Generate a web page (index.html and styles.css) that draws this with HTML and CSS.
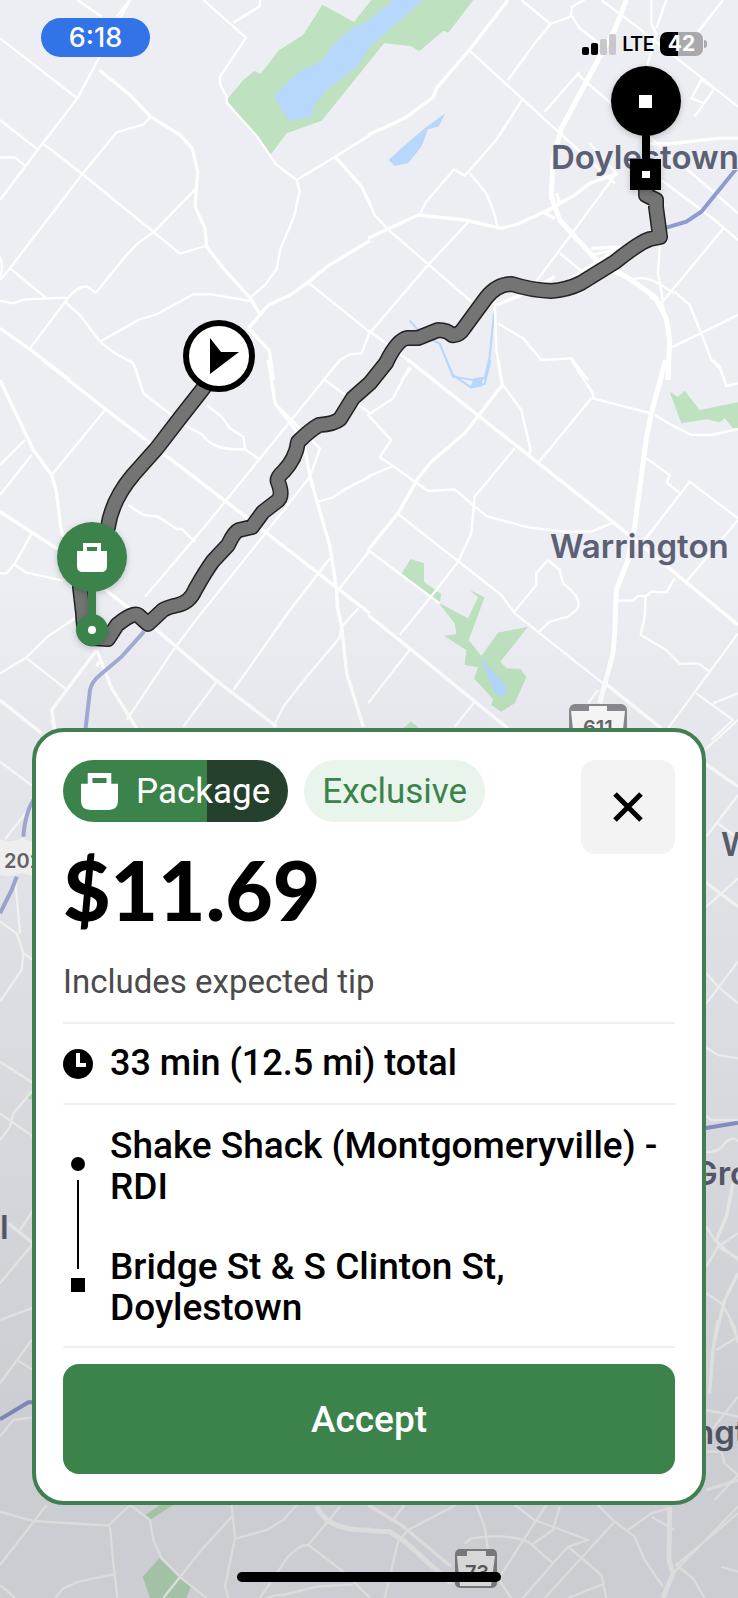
FILE: index.html
```html
<!DOCTYPE html>
<html lang="en">
<head>
  <meta charset="UTF-8">
  <meta name="viewport" content="width=device-width, initial-scale=1">
  <title>Delivery offer</title>
  <link rel="stylesheet" href="styles.css">
</head>
<body>
  <div class="screen">

    <!-- base map, drawn in tiles -->
    <svg class="map" viewBox="0 0 2214 4794" preserveAspectRatio="xMidYMid slice" aria-hidden="true">
      <g>
        <path class="park" d="M967 14L1062 66L1114 0H1420L1345 98L1330 92L1258 154L1232 138L1152 130L1104 190L965 362L860 400L813 463L680 300L730 240L763 213L782 222L835 152L910 104Z"/>
        <path class="water" d="M822 288L895 215L965 184L1008 125L1062 82L1104 64L1180 0H1270L1104 145L1075 198L985 265L942 315L935 350L865 362Z"/>
        <path class="road" d="M390 0L232 295L115 447L0 600M350 50L390 0M0 115L232 295M0 360L115 450M0 473H45L75 497M132 433L247 522L540 761L617 738M452 350L430 373L350 397L247 522L30 805L0 840M588 565L463 695L413 730L375 770L287 879L262 860Q235 855 205 893L90 1045M30 805L137 893M0 903L40 910L75 898L205 893M197 908L240 945L300 1025L340 1057L400 1090L417 1140M300 1025L415 960L470 943L580 883H635L750 903M750 893L795 855L830 807L840 750L882 650L899 573L890 540M0 770Q12 800 0 830M610 0L738 113L660 230V253L680 288V308L770 408L828 493L890 540L1005 470L1110 405M780 0V18L700 68M970 1140L1020 1080L1050 1063L1085 1060L1108 1000M925 848L1108 995M232 0L305 50"/>
        <path class="road wide" d="M298 210L390 285L452 350L540 405L577 445L593 515L585 620L615 685L620 740L670 805L750 893L778 940M745 985L805 915L870 885L920 850L985 797L1110 722M745 985L808 1052L820 1140M1005 470L1085 560L1110 612M0 985L90 1048L210 1140"/>
      </g>
      <g transform="translate(1104 0)">
        <path class="water" d="M232 340L212 380L180 388L160 440L120 490L80 498L62 480L100 445L170 385Z"/>
        <path class="stream" d="M125 962L150 990M378 940L365 1070L350 1135L315 1140L255 1130L215 1030L195 1022"/>
        <path class="road" d="M460 0L548 72L608 50L612 20L650 0M548 72L500 130L420 240M305 152L740 550M465 295L385 420L290 527L258 508L175 605L157 640M305 520L355 580L375 630L390 683M0 600L20 645L60 688L310 905M305 662L180 795L0 1005M610 45L635 85L700 135M700 0L800 75L1110 320M850 0V72L865 100L838 195M895 0L865 85M1065 0L990 95M635 215L530 335M625 220L1110 640M665 430L745 520L575 750L500 850M575 760L650 820M670 765L740 750L600 840M1070 680L880 910M1110 720L1040 660L880 540M390 970L465 1015L520 1080L610 1075L660 1140M380 900L385 1050L400 1140M920 875L965 915L1000 1000L1030 1080L1055 1105L1070 1140M1110 945L905 1045M875 740L870 820L885 905M790 840Q830 825 870 850L920 880M980 350L1040 265L1000 240L970 295L1010 310M0 990L200 1140M130 1105L100 1140"/>
        <path class="road wide" d="M0 405L110 355L195 292L205 265L300 155L420 0M0 715L150 645L290 660L400 685L450 672L540 630L620 585L665 550L750 520M385 915L460 885L560 830M840 430L900 432L1050 415H1110M775 740L670 745"/>
        <path class="road main" d="M775 0L740 90L690 180L650 255L580 385L555 475L550 590L575 660L680 775L790 840L860 890L895 955L905 1020L900 1140"/>
        <path class="road wide" d="M565 580L575 610L530 640L560 655M670 760L700 800L770 830M845 890L880 910L890 940"/>
        <path class="highway" d="M895 683L955 665L1000 635L1110 500"/>
      </g>
      <g transform="translate(0 1080)">
        <path class="road" d="M315 150L155 345M75 240L0 315M95 285L0 405M390 0L405 20L430 100L560 200L605 222Q640 275 735 267L780 300M620 135L665 170L690 205L730 230L735 265M1020 0L610 505L435 710M975 60L1110 160M825 130L960 265L930 350L800 515L580 790L520 870L380 1080M385 435L430 465L475 470L530 507H545L585 545M0 640H20L45 610L95 520M45 615L80 638L190 662M0 940L78 893L145 828L225 775M78 893L195 985M955 425L1000 412L1040 385L1110 350M990 595L870 750L700 990M650 965L550 1100M1075 745L1025 800L1018 835L920 950L850 1040L820 1100M1110 570L1015 690"/>
        <path class="road wide" d="M128 0L320 150L685 430L1110 760M0 60L100 270L155 345L170 400L182 500L188 530M0 455L170 565L330 700L470 810L640 955L830 1100M805 0L825 130L910 240L930 350L990 560L1010 690L1012 740L1025 800L1040 940L1090 1100M290 870L155 1050L165 1110M290 870L335 985L410 1105M290 920Q300 895 310 915M0 1020L125 1120"/>
        <path class="highway soft" d="M432 815L365 890L300 945Q275 965 270 990L255 1120"/>
      </g>
      <g transform="translate(1104 1080)">
        <path class="park" d="M905 95L930 110L950 92L995 150L1110 127V205H1095L1070 175L1055 187L1015 178L940 190ZM128 597L168 610V665L220 703L215 730L300 775L330 712L305 690L350 712L302 840L340 888L390 818L480 800L397 905L415 925L458 927L475 952L440 1030L400 1055L370 1035L375 1018L318 955L330 922L290 915L295 870L228 827L265 822L260 790L205 720L98 645ZM105 1105L128 1085L150 1100V1125H105Z"/>
        <path class="water" d="M335 890L420 985L405 1012L380 998Z"/>
        <path class="stream" d="M235 0L255 45L310 83L350 72L368 0"/>
        <path class="water" d="M318 55L345 50L340 80L305 85Z"/>
        <path class="road" d="M125 20L75 115L0 165L70 240L35 292L75 318L180 393L260 388L315 435L355 468L480 502L590 515H670L730 490M75 318L0 350M440 265L320 410L310 520L270 605L205 690L95 825M88 460L400 705L440 760L705 970M405 75L460 150L488 270L480 290M610 0L675 100V115L850 160M670 115L510 310M860 165L920 200L970 225H1030L1110 207M835 295L905 345L897 368L935 400M830 540L965 365L1110 475M1110 480L955 665M540 600L505 640V675L435 760M540 600L575 630L585 670Q650 720 625 750L600 770L545 785L510 818M750 722H795L810 708H835L850 695L895 697L920 655M833 710L830 770L818 825L895 870L935 912L990 910L1025 935M1110 820L900 1105M985 1000L1095 1080L1030 1140M1035 1030L1110 1000M125 870L0 1030M320 1025L260 1100M690 990L660 1030M1035 0L1055 20L1075 78L1110 70"/>
        <path class="road wide" d="M120 0L740 490L1110 795M390 0L403 75L290 220L190 305L150 355L90 460L0 570M0 765L125 865L420 1105M705 965L880 1105"/>
        <path class="road" d="M0 570L215 730"/>
        <path class="road main" d="M893 0L850 160L835 235L800 500L780 600L745 690L740 820L735 880L695 1030"/>
      </g>
      <g transform="translate(0 2160)">
        <path class="road" d="M0 125L100 200M100 250L15 358M0 605L50 640L70 700L65 750L0 845M70 700L100 720M45 470L60 640M155 0L165 35"/>
        <path class="highway soft" d="M100 240Q75 280 70 350M50 470L35 510L0 580"/>
      </g>
      <g transform="translate(1104 2160)">
        <path class="road" d="M1110 0L1010 90M1110 225L1015 350M1050 310L1110 355M1110 475L1015 560M1015 760L1050 800L1110 850M1110 725L1015 850"/>
        <path class="road wide" d="M1010 130L1110 200M1010 485L1110 560"/>
      </g>
      <g transform="translate(0 3030)">
        <path class="park" d="M80 265L100 245V270Z"/>
        <path class="road" d="M0 155L100 220M100 240L40 310L30 350L0 390M0 310L35 335L100 380M100 600L60 660M100 700L0 820M0 930L100 893"/>
        <path class="road wide" d="M25 640L100 700"/>
      </g>
      <g transform="translate(1104 3030)">
        <path class="road" d="M1010 110L1050 135L1110 145M1010 315L1030 330H1110M1015 425Q1050 430 1070 400Q1095 375 1110 395M1015 650L1040 690L1110 750M1015 770L1050 710L1110 670M1015 850L1060 880L1100 950L1110 1000"/>
        <path class="road wide" d="M1110 500L1095 520L1075 620L1045 690L1060 715L1110 745M1110 790L1070 870L1040 990"/>
        <path class="highway" d="M1010 355L1110 338"/>
      </g>
      <g transform="translate(0 3960)">
        <path class="park" d="M433 587L480 555H520L450 600ZM478 715L572 800L560 834H450L428 770Z"/>
        <path class="road" d="M95 60L0 190M50 120L100 150M0 350L40 300L95 293M0 575L100 603L325 617L390 555M140 555L0 735M330 620L340 730L352 834M340 763L235 785L190 805L165 834M0 795L45 834M390 555L450 600L460 660L485 715L545 775L620 834M695 590L600 695L490 834M695 555L705 655L675 800L685 834M710 655L800 630L850 600L890 555M1020 560L925 675L1030 755L1110 834M925 675Q895 675 860 715L820 775L780 834M800 834L830 825H850L950 800L1060 793"/>
        <path class="road main" d="M950 560Q985 635 1110 630"/>
        <path class="highway" d="M0 298L85 247H100"/>
      </g>
      <g transform="translate(1104 3960)">
        <path class="road" d="M110 555L75 600M265 555L120 630L90 665L50 834M325 555L350 620L360 690L385 770L430 834M440 555L500 600L660 660L600 680M535 555L450 685L390 780M290 670L310 655Q420 640 480 665L555 730L465 834M575 560L555 630L490 675M600 680L555 730M600 680L700 765L715 834M850 590L920 630M900 565L850 580L780 630M710 790L600 834M690 555L740 605L800 650L830 720L885 800M740 605L530 834M1110 560L915 760M1110 580L925 735L975 775L1010 834M1060 740L1110 755M1110 230L1015 350M1015 270L1110 290M1015 395H1060L1070 430L1110 465L1040 540M1110 50L1045 90M1085 0L1110 60"/>
        <path class="road wide" d="M0 555L100 615L250 740M1015 510L1110 480M1050 0L1035 90L1025 220"/>
        <path class="road main" d="M0 632L65 635L110 665L250 790M905 560L903 720L915 760L885 834"/>
      </g>
    </svg>

    <!-- place names, road shields, route and pins -->
    <svg class="map" viewBox="0 0 738 1598" preserveAspectRatio="xMidYMid slice" role="img" aria-label="Route map">
      <defs>
        <linearGradient id="shade" x1="0" y1="0" x2="0" y2="1">
          <stop offset="0.36" stop-color="#000" stop-opacity="0"/>
          <stop offset="0.46" stop-color="#000" stop-opacity="0.03"/>
          <stop offset="0.9" stop-color="#000" stop-opacity="0.14"/>
          <stop offset="1" stop-color="#000" stop-opacity="0.14"/>
        </linearGradient>
      </defs>

      <text class="place" x="551" y="169">Doylestown</text>
      <text class="place" x="550" y="558">Warrington</text>
      <text class="place" x="721" y="856">W</text>
      <text class="place" x="693" y="1185">Gro</text>
      <text class="place" x="0" y="1239">l</text>
      <text class="place" x="694" y="1444">ngt</text>

      <g class="shield">
        <path d="M-20 841L0 839Q12 844 22 838Q34 844 46 840V872Q34 879 22 873Q10 878 0 875L-20 874Z" class="shield-face"/>
        <text x="4" y="868">202</text>
      </g>
      <g class="shield">
        <rect x="569" y="704" width="58" height="54" rx="6" class="shield-edge"/>
        <path class="shield-face" d="M571 711H589V706H607V711H625L620 756H576Z"/>
        <text x="583" y="735">611</text>
      </g>
      <g class="shield">
        <rect x="455" y="1549" width="42" height="39" rx="5" class="shield-edge"/>
        <path class="shield-face" d="M457 1556H467V1551H486V1556H495L491 1586H460Z"/>
        <text x="465" y="1580">73</text>
      </g>

      <rect width="738" height="1598" fill="url(#shade)"/>

      <path class="route-edge" d="M218 368L202 390L180 418L157 448L133 475Q112 500 108 527L80 587L83 613Q84 640 92 638L108 639L117 625Q133 612 138 615L148 624L163 610Q168 607 178 605Q190 602 195 590Q205 572 213 561L228 545Q234 532 239 530L252 527L263 512L276 502Q284 497 278 482Q276 478 284 471Q296 458 298 442Q310 430 319 425Q334 424 340 419L353 398L370 383L386 363Q397 340 407 338H418L438 330Q447 330 452 335Q459 336 464 328L486 298Q497 284 512 284Q530 290 551 291Q567 290 581 283L615 262Q640 242 650 239L660 237L656 207V200L646 195V185"/>
      <path class="route-fill" d="M218 368L202 390L180 418L157 448L133 475Q112 500 108 527L80 587L83 613Q84 640 92 638L108 639L117 625Q133 612 138 615L148 624L163 610Q168 607 178 605Q190 602 195 590Q205 572 213 561L228 545Q234 532 239 530L252 527L263 512L276 502Q284 497 278 482Q276 478 284 471Q296 458 298 442Q310 430 319 425Q334 424 340 419L353 398L370 383L386 363Q397 340 407 338H418L438 330Q447 330 452 335Q459 336 464 328L486 298Q497 284 512 284Q530 290 551 291Q567 290 581 283L615 262Q640 242 650 239L660 237L656 207V200L646 195V185"/>

      <!-- driver -->
      <circle cx="219" cy="356" r="33" fill="#fff" stroke="#000" stroke-width="6"/>
      <path d="M210 338L221 352H239L210 374Z"/>

      <!-- pickup -->
      <g class="pin pickup">
        <circle cx="92" cy="557" r="35"/>
        <path d="M88 590H96V618H88Z"/>
        <circle cx="92" cy="630" r="16"/>
        <circle cx="92" cy="630" r="4" fill="#fff"/>
        <path fill="#fff" fill-rule="evenodd" d="M83 543H101V551H107V566Q107 572 101 572H83Q77 572 77 566V551H83ZM87 547V551H97V547Z"/>
      </g>

      <!-- dropoff -->
      <g class="pin">
        <circle cx="646" cy="101" r="35"/>
        <path d="M642 130H650V162H642ZM630 159H661V190H630Z"/>
        <path fill="#fff" d="M639 95H652V108H639ZM642 171H650V178H642Z"/>
      </g>
    </svg>

    <header class="status">
      <span class="clock">6:18</span>
      <div class="signals">
        <svg width="34" height="21" viewBox="0 0 34 21" aria-hidden="true">
          <rect x="0" y="13" width="7" height="8" rx="2"/>
          <rect x="9" y="9" width="7" height="12" rx="2"/>
          <rect x="18" y="5" width="7" height="16" rx="2" fill="#c8c8cc"/>
          <rect x="27" y="0" width="7" height="21" rx="2" fill="#c8c8cc"/>
        </svg>
        <span class="network">LTE</span>
        <span class="battery">42</span>
      </div>
    </header>

    <main class="offer">
      <div class="offer-top">
        <div class="chips">
          <span class="chip package">
            <svg width="37" height="37" viewBox="0 0 110 110" aria-hidden="true">
              <path fill="#fff" fill-rule="evenodd" d="M20 0H90V32H110V82Q110 110 82 110H28Q0 110 0 82V32H20ZM34 15V30H76V15Z"/>
            </svg>
            Package
          </span>
          <span class="chip exclusive">Exclusive</span>
        </div>
        <button type="button" class="close" aria-label="Decline">
          <svg width="30" height="30" viewBox="0 0 30 30" aria-hidden="true">
            <path d="M2 2L28 28M28 2L2 28" stroke="#000" stroke-width="5"/>
          </svg>
        </button>
        <h1 class="price">$11.69</h1>
      </div>
      <p class="note">Includes expected tip</p>

      <div class="row total">
        <svg class="icon" width="30" height="30" viewBox="0 0 30 30" aria-hidden="true">
          <circle cx="15" cy="15" r="15"/>
          <path d="M15 4V16H23" fill="none" stroke="#fff" stroke-width="4"/>
        </svg>
        <span>33 min (12.5 mi) total</span>
      </div>

      <div class="row trip">
        <div class="rail">
          <span class="dot"></span>
          <span class="line"></span>
          <span class="square"></span>
        </div>
        <ul class="stops">
          <li>Shake Shack (Montgomeryville) - RDI</li>
          <li>Bridge St &amp; S Clinton St, Doylestown</li>
        </ul>
      </div>

      <button type="button" class="accept">Accept</button>
    </main>

    <div class="home-bar"></div>
  </div>
</body>
</html>
```
FILE: styles.css
```css
* {
  box-sizing: border-box;
}
body {
  margin: 0;
  font-family: Roboto, Arial, sans-serif;
  color: #000;
}
.screen {
  position: relative;
  display: flex;
  flex-direction: column;
  min-height: 100vh;
  overflow: hidden;
  background: #edeef4;
}

/* map */
.map {
  position: absolute;
  top: 0;
  left: 0;
  width: 100%;
  height: 100%;
}
.park {
  fill: #bee2c0;
}
.water {
  fill: #b7d7fd;
}
.stream {
  fill: none;
  stroke: #b7d7fd;
  stroke-width: 6;
}
.road {
  fill: none;
  stroke: #fff;
  stroke-width: 7;
  stroke-linejoin: round;
}
.road.wide {
  stroke-width: 10;
}
.road.main {
  stroke-width: 15;
}
.highway {
  fill: none;
  stroke: #8f9bd0;
  stroke-width: 12;
}
.highway.soft {
  stroke: #a3acd6;
}
.place {
  font-family: Inter, Arial, sans-serif;
  font-size: 33px;
  font-weight: 600;
  fill: #5b6072;
  stroke: #edeef4;
  stroke-width: 2px;
  paint-order: stroke;
}
.shield {
  font-family: Inter, Arial, sans-serif;
  font-size: 20px;
  font-weight: 600;
  fill: #66666b;
}
.shield-edge {
  fill: #8a8a8f;
}
.shield-face {
  fill: #fafafa;
}
.route-edge {
  fill: none;
  stroke: #222;
  stroke-width: 16px;
  stroke-linejoin: round;
}
.route-fill {
  fill: none;
  stroke: #747474;
  stroke-width: 13px;
  stroke-linejoin: round;
}
.pin {
  filter: drop-shadow(0 2px 3px rgba(0, 0, 0, 0.2));
}
.pickup {
  fill: #3c834b;
}

/* status bar */
.status {
  position: relative;
  display: flex;
  justify-content: space-between;
  align-items: flex-start;
  padding: 18px 35px 0 41px;
  font-family: Inter, Arial, sans-serif;
}
.clock {
  width: 109px;
  border-radius: 20px;
  background: #3273e8;
  color: #fff;
  font-size: 27px;
  font-weight: 500;
  line-height: 39px;
  text-align: center;
}
.signals {
  display: flex;
  align-items: center;
  gap: 6px;
  padding-top: 14px;
}
.network {
  font-family: Roboto, Arial, sans-serif;
  font-size: 20px;
  font-weight: 500;
  line-height: 24px;
}
.battery {
  position: relative;
  width: 43px;
  border-radius: 7px;
  background: linear-gradient(to right, #000 42%, #a9a9ad 42%);
  color: #fff;
  font-size: 21px;
  font-weight: 700;
  line-height: 24px;
  text-align: center;
}
.battery::after {
  content: "";
  position: absolute;
  top: 8px;
  right: -4px;
  width: 3px;
  height: 8px;
  border-radius: 0 3px 3px 0;
  background: #a9a9ad;
}

/* offer card */
.offer {
  position: relative;
  margin: auto 32px 67px;
  padding: 28px 27px 27px;
  border: 4px solid #417f50;
  border-radius: 32px;
  background: #fff;
}
.offer-top {
  display: grid;
  grid-template-columns: 1fr auto;
  grid-template-rows: 62px auto;
}
.chips {
  display: flex;
  gap: 16px;
}
.chip {
  display: flex;
  align-items: center;
  height: 62px;
  padding: 0 18px;
  border-radius: 31px;
  font-size: 35px;
}
.package {
  gap: 18px;
  background: linear-gradient(to right, #3c834b 64%, #25402d 64%);
  color: #fff;
}
.exclusive {
  background: #e9f4ec;
  color: #3c834b;
}
.close {
  grid-row: 1 / 3;
  grid-column: 2;
  display: flex;
  align-items: center;
  justify-content: center;
  width: 94px;
  height: 94px;
  padding: 0;
  border: 0;
  border-radius: 14px;
  background: #f3f3f3;
}
.price {
  margin: 16px 0 0;
  font-family: Lato, Arial, sans-serif;
  font-size: 82px;
  font-weight: 900;
  line-height: 103px;
}
.note {
  margin: 20px 0;
  color: #4b4b4b;
  font-size: 33px;
  line-height: 41px;
}
.row {
  display: flex;
  gap: 17px;
  border-top: 2px solid #f0f0f0;
  font-size: 36px;
  font-weight: 500;
  line-height: 41px;
}
.total {
  align-items: center;
  padding: 19px 0;
}
.trip {
  padding: 20px 0 18px;
  border-bottom: 2px solid #f0f0f0;
}
.rail {
  display: flex;
  flex: none;
  flex-direction: column;
  align-items: center;
  gap: 9px;
  width: 30px;
  padding: 32px 0 36px;
}
.dot {
  width: 14px;
  height: 14px;
  border-radius: 50%;
  background: #000;
}
.line {
  flex: 1;
  width: 2px;
  background: #000;
}
.square {
  width: 14px;
  height: 14px;
  background: #000;
}
.stops {
  display: flex;
  flex-direction: column;
  gap: 39px;
  margin: 0;
  padding: 0;
  font-size: 37px;
  list-style: none;
}
.accept {
  display: block;
  width: 100%;
  height: 110px;
  margin-top: 16px;
  border: 0;
  border-radius: 16px;
  background: #3c834b;
  color: #fff;
  font-family: inherit;
  font-size: 37px;
  font-weight: 500;
}
.home-bar {
  position: relative;
  width: 264px;
  height: 10px;
  margin: 0 auto 16px;
  border-radius: 5px;
  background: #000;
}
```
